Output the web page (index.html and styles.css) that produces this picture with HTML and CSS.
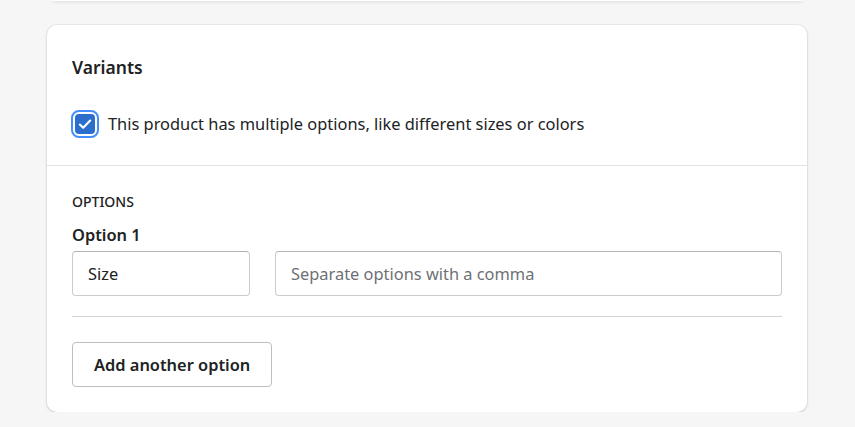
FILE: index.html
```html
<!doctype html>
<html lang="en">
  <head>
    <meta charset="UTF-8" />
    <meta name="viewport" content="width=device-width, initial-scale=1.0" />
    <title>Variants</title>
    <link rel="stylesheet" href="styles.css">
  </head>
  <body>
    <div class="card card-prev"></div>

    <div class="card">
      <div class="section">
        <h2>Variants</h2>
        <label class="check">
          <span class="check-box">
            <svg viewBox="0 0 20 20" width="20" height="20">
              <path d="M4.8 10.6l3.4 3.2L15.2 6.6" fill="none" stroke="#fff" stroke-width="2.1" stroke-linecap="round" stroke-linejoin="round" />
            </svg>
          </span>
          This product has multiple options, like different sizes or colors
        </label>
      </div>

      <div class="section options">
        <div class="subheading">OPTIONS</div>
        <div class="option-label">Option 1</div>
        <div class="option-row">
          <div class="field field-name">Size</div>
          <div class="field field-values placeholder">Separate options with a comma</div>
        </div>
        <div class="rule"></div>
        <button class="btn">Add another option</button>
      </div>
    </div>
  </body>
</html>
```

FILE: styles.css
```css
:root {
  font-family: "Noto Sans", "Open Sans", Arial, sans-serif;
  font-size: 16.4px;
  color: #202223;
  background-color: #f6f6f7;
}

body {
  margin: 0;
  padding: 0 48px 0 47px;
}

.card {
  background: #fff;
  border-radius: 10px;
  box-shadow: 0 0 0 1px rgba(63, 63, 68, 0.05), 0 1px 3px rgba(63, 63, 68, 0.18);
  margin-top: 24px;
}

.card-prev {
  height: 1px;
  margin: 0 5px;
  border-radius: 0 0 10px 10px;
  box-shadow: 0 1px 3px rgba(63, 63, 68, 0.25);
}

.section {
  padding: 28px 25px 27px;
}

.section + .section {
  border-top: 1px solid #e1e3e5;
}

h2 {
  margin: 0;
  font-size: 17.5px;
  font-weight: 600;
  line-height: 28px;
}

.check {
  display: flex;
  align-items: center;
  gap: 13px;
  margin-top: 29px;
  line-height: 28px;
}

.check-box {
  width: 20px;
  height: 20px;
  margin-left: 3px;
  border-radius: 4px;
  background: #2c6ecb;
  display: flex;
  align-items: center;
  justify-content: center;
  outline: 2px solid #458fff;
  outline-offset: 2px;
}

.options {
  padding-top: 26px;
  padding-bottom: 25px;
}

.subheading {
  font-size: 14px;
  font-weight: 500;
  line-height: 20px;
}

.option-label {
  font-weight: 600;
  line-height: 24px;
  margin-top: 11px;
}

.option-row {
  display: flex;
  gap: 25px;
  margin-top: 4px;
}

.field {
  height: 45px;
  box-sizing: border-box;
  border: 1px solid #c9cccf;
  border-top-color: #aeb4b9;
  border-radius: 4px;
  padding: 0 15px;
  display: flex;
  align-items: center;
}

.field-name {
  width: 178px;
}

.field-values {
  flex: 1;
}

.placeholder {
  color: #6d7175;
}

.rule {
  height: 1px;
  background: #d2d5d8;
  margin-top: 20px;
}

.btn {
  margin-top: 25px;
  height: 45px;
  padding: 0 21px;
  background: #fff;
  border: 1px solid #babfc3;
  border-radius: 4px;
  font-family: inherit;
  font-size: 16.4px;
  font-weight: 600;
  color: #202223;
  cursor: pointer;
}
```
